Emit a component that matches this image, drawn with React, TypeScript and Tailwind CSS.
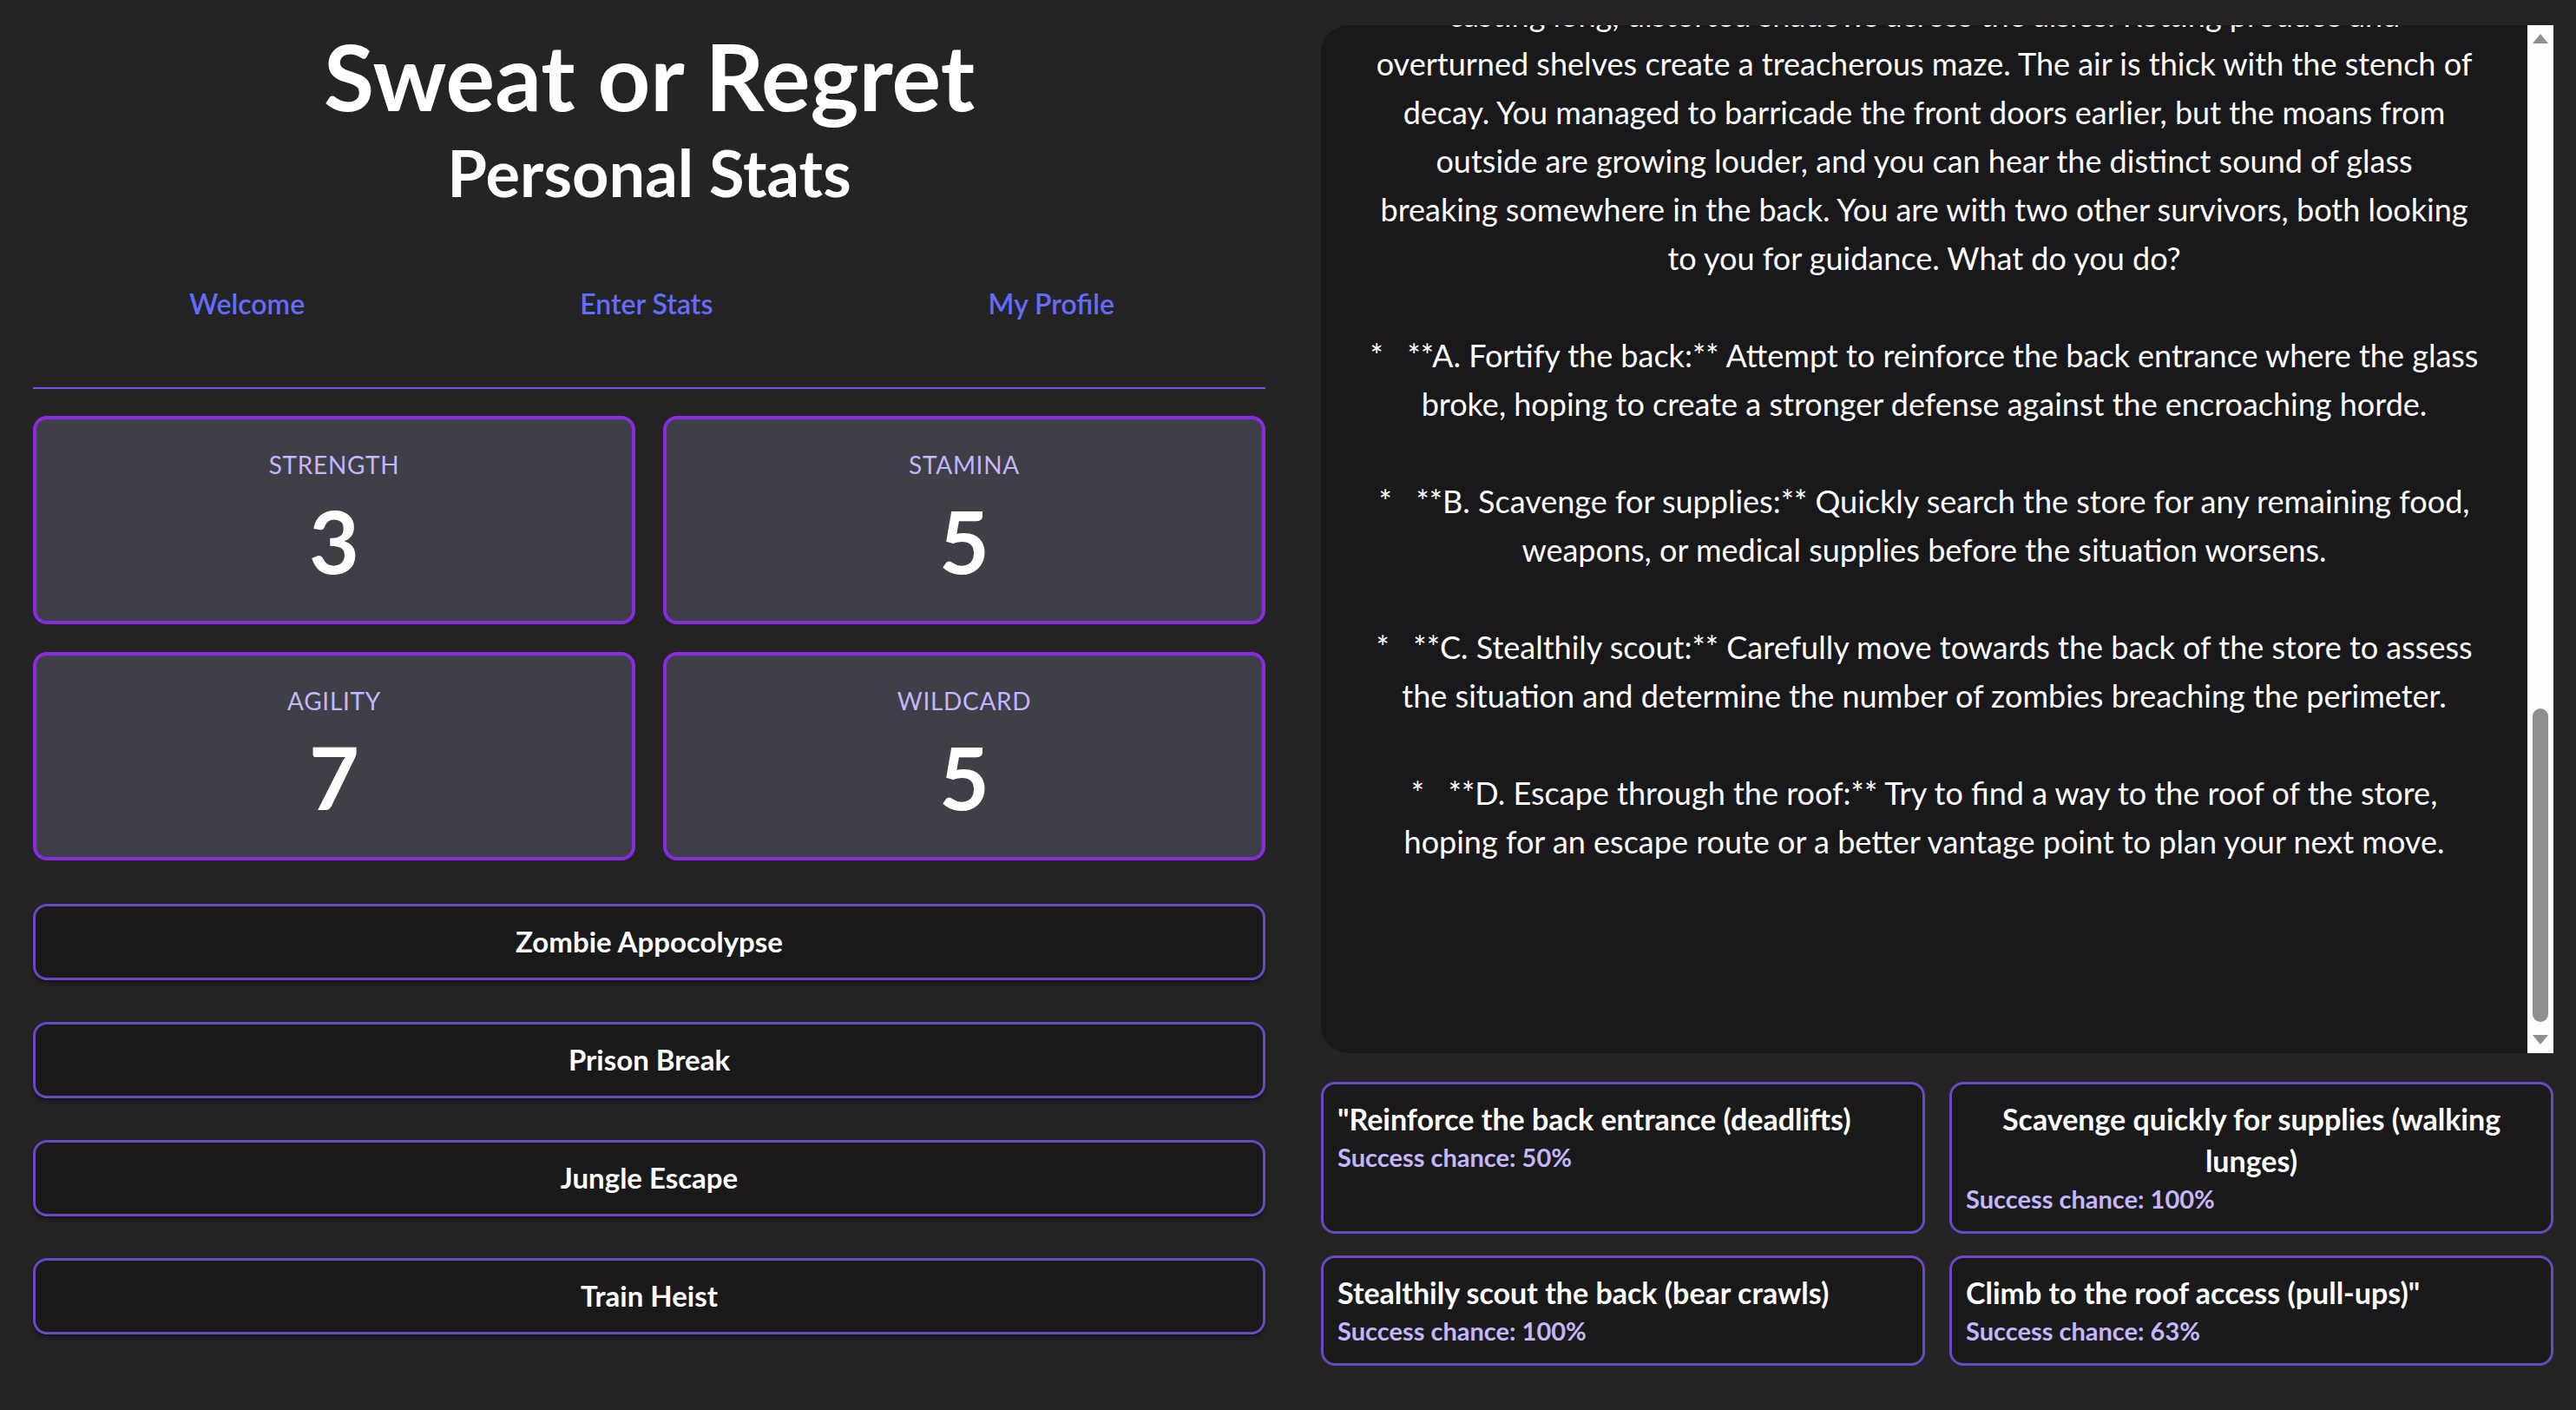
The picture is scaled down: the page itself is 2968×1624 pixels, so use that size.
import React from 'react';

const STATS = [
    { label: 'Strength', value: 3 },
    { label: 'Stamina', value: 5 },
    { label: 'Agility', value: 7 },
    { label: 'Wildcard', value: 5 },
];

const SCENARIOS = ['Zombie Appocolypse', 'Prison Break', 'Jungle Escape', 'Train Heist'];

const STORY = [
    'casting long, distorted shadows across the aisles. Rotting produce and',
    'overturned shelves create a treacherous maze. The air is thick with the stench of',
    'decay. You managed to barricade the front doors earlier, but the moans from',
    'outside are growing louder, and you can hear the distinct sound of glass',
    'breaking somewhere in the back. You are with two other survivors, both looking',
    'to you for guidance. What do you do?',
    '',
    '*   **A. Fortify the back:** Attempt to reinforce the back entrance where the glass',
    'broke, hoping to create a stronger defense against the encroaching horde.',
    '',
    '*   **B. Scavenge for supplies:** Quickly search the store for any remaining food,',
    'weapons, or medical supplies before the situation worsens.',
    '',
    '*   **C. Stealthily scout:** Carefully move towards the back of the store to assess',
    'the situation and determine the number of zombies breaching the perimeter.',
    '',
    '*   **D. Escape through the roof:** Try to find a way to the roof of the store,',
    'hoping for an escape route or a better vantage point to plan your next move.',
];

const CHOICES = [
    { title: '"Reinforce the back entrance (deadlifts)', chance: 50 },
    { title: 'Scavenge quickly for supplies (walking lunges)', chance: 100 },
    { title: 'Stealthily scout the back (bear crawls)', chance: 100 },
    { title: 'Climb to the roof access (pull-ups)"', chance: 63 },
];

function Scrollbar() {
    return (
        <div className="relative w-[30px] shrink-0 bg-[#fdfdfd]">
            <svg className="absolute left-[6px] top-[10px]" width="18" height="11" viewBox="0 0 18 11">
                <path d="M9 0 L18 11 L0 11 Z" fill="#8f8f8f" />
            </svg>
            <div className="absolute left-[6px] top-[787px] w-[18px] h-[361px] rounded-full bg-[#8f8f8f]" />
            <svg className="absolute left-[6px] bottom-[10px]" width="18" height="11" viewBox="0 0 18 11">
                <path d="M0 0 L18 0 L9 11 Z" fill="#8f8f8f" />
            </svg>
        </div>
    );
}

export default function App() {
    return (
        <div
            className="min-h-screen bg-[#242424] text-white flex gap-[64px] pl-[38px] pr-[26px]"
            style={{ fontFamily: 'Lato, "Open Sans", sans-serif' }}
        >
            {/* LEFT: stats */}
            <div className="w-[1420px] shrink-0 flex flex-col">
                <h1 className="mt-[31px] text-center font-bold text-[106px] leading-[112px]">Sweat or Regret</h1>
                <h2 className="mt-[16px] text-center font-bold text-[74px] leading-[80px]">Personal Stats</h2>

                <nav className="mt-[87px] flex justify-between pl-[180px] pr-[174px] text-[32px] leading-[48px] font-semibold text-[#646cff]">
                    <a>Welcome</a>
                    <a>Enter Stats</a>
                    <a>My Profile</a>
                </nav>

                <div className="mt-[72px] h-[2px] bg-[#7c4df5]" />

                <div className="mt-[31px] grid grid-cols-2 gap-x-[32px] gap-y-[32px]">
                    {STATS.map(s => (
                        <div
                            key={s.label}
                            className="h-[240px] rounded-2xl border-4 border-[#8a2be2] bg-[#3f3f47] flex flex-col items-center pt-[31px]"
                        >
                            <div className="text-[28px] leading-[42px] uppercase tracking-wide text-[#c4b5fd]">{s.label}</div>
                            <div className="mt-[16px] text-[100px] leading-[100px] font-bold">{s.value}</div>
                        </div>
                    ))}
                </div>

                <div className="mt-[50px] flex flex-col gap-[48px]">
                    {SCENARIOS.map(name => (
                        <button
                            key={name}
                            className="h-[88px] rounded-2xl border-[3px] border-[#6a48c4] bg-[#1a1a1a] text-[33px] font-bold shadow-md shadow-black/30"
                        >
                            {name}
                        </button>
                    ))}
                </div>
            </div>

            {/* RIGHT: story */}
            <div className="w-[1420px] shrink-0 flex flex-col">
                <div className="mt-[29px] h-[1184px] flex">
                    <div className="flex-1 rounded-l-[32px] bg-[#19191b] overflow-hidden flex flex-col justify-end pb-[216px]">
                        <p className="whitespace-pre text-center text-[36px] leading-[56px]">{STORY.join('\n')}</p>
                    </div>
                    <Scrollbar />
                </div>

                <div className="mt-[33px] grid grid-cols-2 gap-x-[28px] gap-y-[25px]">
                    {CHOICES.map(c => (
                        <button
                            key={c.title}
                            className="rounded-2xl border-[3px] border-[#6a48c4] bg-[#1a1a1a] text-center flex flex-col items-start pt-[16px] pb-[17px] px-[16px]"
                        >
                            <span className="text-[34px] leading-[48px] font-bold">{c.title}</span>
                            <span className="text-[29px] leading-[40px] font-bold text-[#c4b5fd]">Success chance: {c.chance}%</span>
                        </button>
                    ))}
                </div>
            </div>
        </div>
    );
}
